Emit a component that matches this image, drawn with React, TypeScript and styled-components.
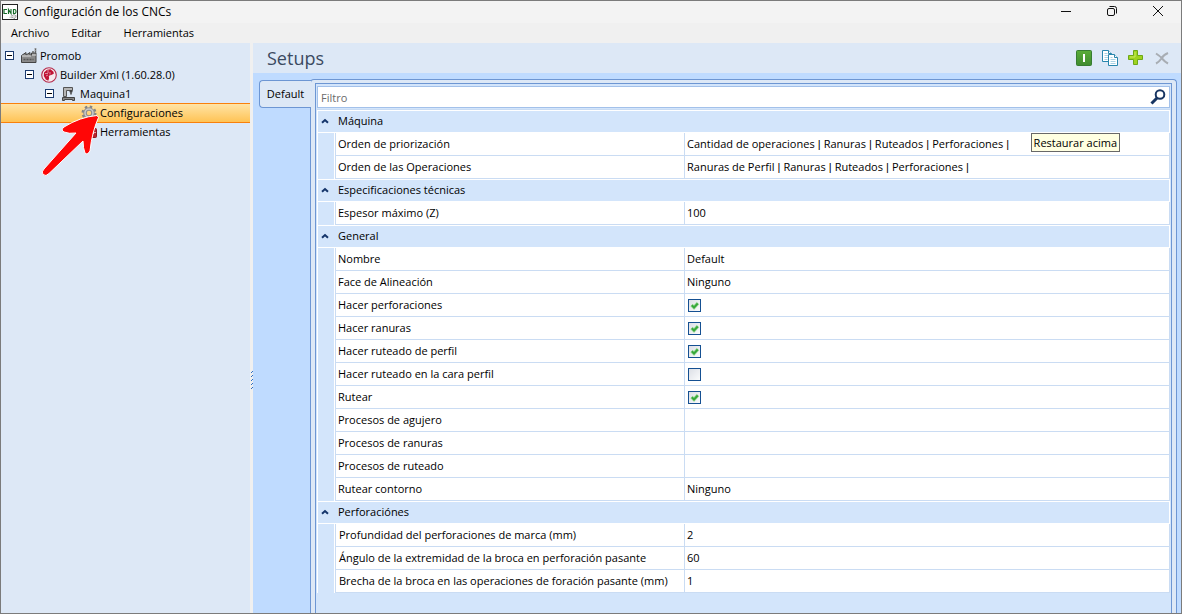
import React, { useState } from "react";
import styled, { createGlobalStyle, css } from "styled-components";

const GlobalStyle = createGlobalStyle`
  *, *::before, *::after { box-sizing: border-box; }
  body {
    margin: 0;
    background: #ffffff;
    color: #000000;
    font: 11px/16px "Open Sans", "Noto Sans", sans-serif;
  }
  button { font: inherit; color: inherit; }
`;

const Window = styled.div`
  display: flex;
  flex-direction: column;
  min-height: 100vh;
  margin-right: 3px;
  border: 1px solid #7b7b7b;
  background: #f0f0f0;
`;

const TitleBar = styled.header`
  display: flex;
  align-items: center;
  height: 22px;
  padding-left: 1px;
  background: #f3f3f3;
`;

const WindowTitle = styled.h1`
  flex: 1;
  margin: 0 0 0 6px;
  font-size: 12px;
  font-weight: 400;
`;

const CaptionButton = styled.button`
  display: flex;
  align-items: center;
  justify-content: center;
  width: 46px;
  height: 22px;
  padding: 0 0 2px;
  border: 0;
  background: transparent;
`;

const MenuBar = styled.nav`
  display: flex;
  align-items: center;
  height: 20px;
  background: #f0f0f0;
`;

const MenuButton = styled.button`
  height: 20px;
  padding: 0 10px;
  margin-right: 2px;
  border: 0;
  background: transparent;
`;

const Body = styled.div`
  display: flex;
  flex: 1;
`;

const Sidebar = styled.aside`
  position: relative;
  flex: 0 0 249px;
  padding-top: 3px;
  background: #dde8f6;
`;

const TreeItem = styled.div<{ $level: number; $selected?: boolean }>`
  display: flex;
  align-items: center;
  height: 19px;
  padding-left: ${(p) => 4 + p.$level * 20}px;
  border: solid transparent;
  border-width: 1px 0;
  ${(p) =>
    p.$selected &&
    css`
      height: 20px;
      margin-bottom: -1px;
      border-color: #f9800b;
      background: linear-gradient(#ffe4a6, #ffc355);
    `}
`;

const Expander = styled.button`
  display: flex;
  width: 9px;
  height: 9px;
  margin-right: 7px;
  padding: 0;
  border: 0;
  background: transparent;
`;

const ExpanderGap = styled.span`
  width: 16px;
`;

const TreeIcon = styled.span`
  display: flex;
  width: 16px;
  height: 16px;
  margin-right: 3px;
`;

const Pointer = styled.svg`
  position: absolute;
  left: 37px;
  top: 69px;
  pointer-events: none;
`;

const Splitter = styled.div`
  display: flex;
  flex: 0 0 3px;
  align-items: center;
  justify-content: flex-end;
  padding-top: 106px;
  background: #f0f0f0;
`;

const Main = styled.main`
  display: flex;
  flex: 1;
  flex-direction: column;
  min-width: 0;
  background: #bfdbff;
`;

const PanelHeader = styled.div`
  display: flex;
  align-items: center;
  justify-content: space-between;
  height: 30px;
  padding: 0 11px 0 14px;
  background: #dde8f6;
`;

const PanelTitle = styled.h2`
  margin: 0;
  color: #3b4a61;
  font-size: 18px;
  font-weight: 400;
  line-height: 24px;
`;

const Toolbar = styled.div`
  display: flex;
  gap: 10px;
`;

const ToolButton = styled.button`
  display: flex;
  width: 16px;
  height: 16px;
  padding: 0;
  border: 0;
  background: transparent;
`;

const TabArea = styled.div`
  display: flex;
  flex: 1;
  align-items: stretch;
  padding: 6px 4px 0 6px;
`;

const TabList = styled.div`
  z-index: 1;
  width: 52px;
  margin-right: -1px;
  padding-top: 1px;
`;

const Tab = styled.button`
  width: 52px;
  height: 28px;
  padding: 0;
  border: 1px solid #6d96d3;
  border-right: 0;
  border-radius: 4px 0 0 4px;
  background: #dde8f6;
`;

const TabPage = styled.div`
  display: flex;
  flex: 1;
  min-width: 0;
  padding: 3px 4px 0 4px;
  border: 1px solid #6d96d3;
  border-bottom: 0;
  border-radius: 4px 4px 0 0;
  background: #dde8f6;
`;

const GridPanel = styled.section`
  position: relative;
  flex: 1;
  min-width: 0;
  padding: 2px 1px 0 1px;
  border: 1px solid #6d96d3;
  border-bottom: 0;
  background: #d3e5fb;
`;

const FilterBox = styled.div`
  display: flex;
  align-items: center;
  height: 22px;
  margin-bottom: 1px;
  padding: 0 3px;
  border: 1px solid #a3c1ea;
  background: #ffffff;
`;

const FilterInput = styled.input`
  flex: 1;
  min-width: 0;
  height: 20px;
  padding: 0;
  border: 0;
  outline: 0;
  background: transparent;
  font: inherit;
  &::placeholder {
    color: #6b6b6b;
    opacity: 1;
  }
`;

const PropertyTable = styled.table`
  width: 100%;
  border-spacing: 0;
  border-top: 1px solid #c9dcf4;
  table-layout: fixed;
`;

const GutterCol = styled.col`
  width: 18px;
`;

const NameCol = styled.col`
  width: 350px;
`;

const cell = css`
  height: 23px;
  padding: 0 2px;
  font-weight: 400;
  text-align: left;
  white-space: nowrap;
`;

const CategoryCell = styled.th`
  ${cell}
  padding: 0 0 1px;
  border: 1px solid #ffffff;
  background: #d3e5fb;
`;

const CategoryButton = styled.button`
  display: flex;
  align-items: center;
  gap: 9px;
  width: 100%;
  height: 20px;
  padding: 0 3px 1px;
  border: 0;
  background: transparent;
`;

const GutterCell = styled.td`
  padding: 0;
  border: solid #ffffff;
  border-width: 0 1px;
  background: #d3e5fb;
`;

const NameCell = styled.th<{ $nested?: boolean }>`
  ${cell}
  padding-left: ${(p) => (p.$nested ? 3 : 2)}px;
  border: solid #cadcf3;
  border-width: 0 1px 1px 1px;
  background: #ffffff;
`;

const ValueCell = styled.td`
  ${cell}
  border: solid #cadcf3;
  border-width: 0 1px 1px 0;
  background: #ffffff;
`;

const Divider = styled.span`
  font-family: "Liberation Sans", sans-serif;
`;

const CheckBox = styled.span`
  display: grid;
  width: 13px;
  height: 13px;
  margin-left: 1px;
  > * {
    grid-area: 1 / 1;
  }
  > svg {
    pointer-events: none;
  }
`;

const CheckInput = styled.input`
  appearance: none;
  width: 13px;
  height: 13px;
  margin: 0;
  border: 1px solid #155092;
  background: linear-gradient(135deg, #dcdfe6, #fafbfc);
`;

const Tooltip = styled.div`
  position: absolute;
  right: 51px;
  top: 49px;
  height: 19px;
  padding: 0 2px;
  border: 1px solid #686868;
  background: #ffffe1;
  line-height: 17px;
`;

const AppIcon = () => (
  <svg width="16" height="16" viewBox="0 0 16 16">
    <rect x=".5" y=".5" width="15" height="15" fill="#fff" stroke="#222" />
    <path d="M5 5.500H2v4h3M6.500 10V5.500l2.500 4V5M11.500 5v4.500h1.500q1-.5 1-2t-1-2h-1.500" fill="none" stroke="#176b29" strokeWidth="1.200" />
    <circle cx="12" cy="12.500" r="2" fill="#ddd" stroke="#777" strokeDasharray="1 1" />
    <circle cx="9" cy="13" r="1" fill="none" stroke="#999" strokeDasharray="1 1" />
  </svg>
);

const MinusBox = () => (
  <svg width="9" height="9" viewBox="0 0 9 9" shapeRendering="crispEdges">
    <rect x=".5" y=".5" width="8" height="8" fill="#fff" stroke="#1c3c70" />
    <path d="M2 4.500h5" stroke="#000" />
  </svg>
);

const FactoryIcon = () => (
  <svg width="16" height="16" viewBox="0 0 16 16">
    <path d="M.5 14.500V7.500L5 4.500V7L9 4.500V7h1.500V5h4.500v9.500z" fill="#8b8b8b" stroke="#444" />
    <path d="M1 8h9M11 7h4" stroke="#ddd" />
    <path d="M2.500 11.500h10" stroke="#555" strokeWidth="1.500" strokeDasharray="2 1" />
    <path d="M12 5V3M14.500 5V0" stroke="#666" strokeWidth="1.500" />
    <path d="M14 3V0" stroke="#bbb" strokeWidth="1" strokeDasharray="1 1" />
  </svg>
);

const BuilderIcon = () => (
  <svg width="16" height="16" viewBox="0 0 16 16">
    <circle cx="8" cy="8" r="7.300" fill="#f5e9ee" stroke="#b42a4b" strokeWidth="1.100" />
    <path d="M3 5.500 6 2.800l3.500-.6 3 2.500.3 2-2 1L8.500 8.500l-.7.800.3 2-.8 2.500-2.500-1.200-2-3.600z" fill="#c01335" />
    <path d="M7 3v3M4 6.500h3M9 5v2.500M5 9l2-1" stroke="#e9a7b7" strokeWidth=".8" />
  </svg>
);

const MachineIcon = () => (
  <svg width="16" height="16" viewBox="0 0 16 16">
    <path d="M2.500 10.500v-9h9v3h-6v6z" fill="#b5b5b5" stroke="#555" />
    <path d="M10 4v4.500M8.500 5.500h3" stroke="#444" strokeWidth="1.500" />
    <path d="M1.500 14.500v-3h12v3h-2v-1h-8v1z" fill="#888" stroke="#444" />
  </svg>
);

const GearIcon = () => (
  <svg width="16" height="16" viewBox="0 0 16 16">
    <circle cx="8" cy="8" r="6.200" fill="none" stroke="#858585" strokeWidth="2.600" strokeDasharray="2.400 2.470" />
    <circle cx="8" cy="8" r="4" fill="none" stroke="#8e8e8e" strokeWidth="3.600" />
    <circle cx="8" cy="8" r="4" fill="none" stroke="#c9c9c9" strokeWidth="1.600" />
  </svg>
);

const ToolboxIcon = () => (
  <svg width="16" height="16" viewBox="0 0 16 16">
    <path d="M5 5V3h6v2" fill="none" stroke="#555" strokeWidth="1.500" />
    <rect x=".5" y="4.500" width="15" height="9" rx="1" fill="#b9232f" stroke="#8c1720" />
    <path d="M1 8.500h14" stroke="#e5a1a5" />
    <path d="M11 7h2v3h-2z" fill="#eee" />
  </svg>
);

const ArrowDrawing = () => (
  <Pointer width="64" height="68" viewBox="0 0 64 68" aria-hidden="true">
    <path
      d="M59 3.500Q42 5 26 15Q22.500 18 26 20Q31 22 38 21L6 57Q3 60 5 62.500Q8 65 11 61.500L45 29Q45 36 47 41Q49 43.500 52 39Q54 20 60.500 5.500Z"
      fill="#ff0606"
      stroke="#fff"
      strokeWidth="1"
      strokeLinejoin="round"
    />
  </Pointer>
);

const Grip = () => (
  <svg width="2" height="20" viewBox="0 0 2 20" shapeRendering="crispEdges" aria-hidden="true">
    {[0, 4, 8, 12, 16].map((y) => (
      <path key={y} d={`M1 ${y}h1v1h-1zM0 ${y + 1}h1v1h-1z`} fill="#2f6fc4" />
    ))}
  </svg>
);

const ActivateIcon = () => (
  <svg width="16" height="16" viewBox="0 0 16 16">
    <defs>
      <linearGradient id="activate" x2="0" y2="1">
        <stop stopColor="#5aad38" />
        <stop offset="1" stopColor="#3f8b2f" />
      </linearGradient>
    </defs>
    <rect x=".5" y=".5" width="15" height="15" rx="1" fill="url(#activate)" stroke="#377d31" />
    <path d="M8 4v8" stroke="#fff" strokeWidth="2" />
  </svg>
);

const CopyIcon = () => (
  <svg width="16" height="16" viewBox="0 0 16 16" fill="#fff" stroke="#2986ad">
    <path d="M.5.500h6l3 3v8h-9z" />
    <path d="M2.500 3.500h3M2.500 5.500h4M2.500 7.500h4M2.500 9.500h3" stroke="#a9d2e4" />
    <path d="M6.500.500v3h3" />
    <path d="M6.500 4.500h6l3 3v8h-9z" />
    <path d="M8.500 7.500h2M8.500 9.500h5M8.500 11.500h5M8.500 13.500h5" stroke="#a9d2e4" />
    <path d="M12.500 4.500v3h3" />
  </svg>
);

const AddIcon = () => (
  <svg width="16" height="16" viewBox="0 0 16 16">
    <path d="M5.500.500h4v5h5v4h-5v5h-4v-5h-5v-4h5z" fill="#9ed31f" stroke="#6da818" />
    <path d="M7 2v5H2" fill="none" stroke="#c8ea60" />
  </svg>
);

const DeleteIcon = () => (
  <svg width="16" height="16" viewBox="0 0 16 16">
    <path d="M2 3.500Q6 6 8 8.500 11 12 14 13.500M14 3Q9 5 7 9 5 12 2 13.500" fill="none" stroke="#a8adb3" strokeWidth="2" />
  </svg>
);

const SearchIcon = () => (
  <svg width="16" height="16" viewBox="0 0 16 16" fill="none" stroke="#173562">
    <circle cx="10" cy="5.500" r="4.300" strokeWidth="2" />
    <path d="M7 9 1.500 14.500" strokeWidth="3" />
  </svg>
);

const ChevronIcon = () => (
  <svg width="8" height="6" viewBox="0 0 8 6">
    <path d="M1 4.800 4 2l3 2.800" fill="none" stroke="#15356b" strokeWidth="2" />
  </svg>
);

const CheckMark = () => (
  <svg width="13" height="13" viewBox="0 0 13 13">
    <path d="M3.500 6 6 8.500 10 4" fill="none" stroke="#a6dda2" strokeWidth="3.400" />
    <path d="M3.800 6.300 6 8.500 9.700 4.500" fill="none" stroke="#38a83c" strokeWidth="2" />
  </svg>
);

type Property = { name: string; value: string | boolean | string[] };
type Category = { title: string; nested?: boolean; items: Property[] };

const categories: Category[] = [
  {
    title: "Máquina",
    items: [
      { name: "Orden de priorización", value: ["Cantidad de operaciones", "Ranuras", "Ruteados", "Perforaciones"] },
      { name: "Orden de las Operaciones", value: ["Ranuras de Perfil", "Ranuras", "Ruteados", "Perforaciones"] },
    ],
  },
  {
    title: "Especificaciones técnicas",
    items: [{ name: "Espesor máximo (Z)", value: "100" }],
  },
  {
    title: "General",
    items: [
      { name: "Nombre", value: "Default" },
      { name: "Face de Alineación", value: "Ninguno" },
      { name: "Hacer perforaciones", value: true },
      { name: "Hacer ranuras", value: true },
      { name: "Hacer ruteado de perfil", value: true },
      { name: "Hacer ruteado en la cara perfil", value: false },
      { name: "Rutear", value: true },
      { name: "Procesos de agujero", value: "" },
      { name: "Procesos de ranuras", value: "" },
      { name: "Procesos de ruteado", value: "" },
      { name: "Rutear contorno", value: "Ninguno" },
    ],
  },
  {
    title: "Perforaciónes",
    nested: true,
    items: [
      { name: "Profundidad del perforaciones de marca (mm)", value: "2" },
      { name: "Ángulo de la extremidad de la broca en perforación pasante", value: "60" },
      { name: "Brecha de la broca en las operaciones de foración pasante (mm)", value: "1" },
    ],
  },
];

const tree = [
  { label: "Promob", level: 0, icon: <FactoryIcon />, open: true },
  { label: "Builder Xml (1.60.28.0)", level: 1, icon: <BuilderIcon />, open: true },
  { label: "Maquina1", level: 2, icon: <MachineIcon />, open: true },
  { label: "Configuraciones", level: 3, icon: <GearIcon />, selected: true },
  { label: "Herramientas", level: 3, icon: <ToolboxIcon /> },
];

function PropertyRow({ item, nested }: { item: Property; nested?: boolean }) {
  const { name, value } = item;
  const isFlag = typeof value === "boolean";
  const [checked, setChecked] = useState(value === true);
  const id = name.toLowerCase().replace(/\s+/g, "-");
  return (
    <tr>
      <GutterCell />
      <NameCell scope="row" $nested={nested}>
        {isFlag ? <label htmlFor={id}>{name}</label> : name}
      </NameCell>
      <ValueCell>
        {isFlag ? (
          <CheckBox>
            <CheckInput id={id} type="checkbox" checked={checked} onChange={() => setChecked(!checked)} />
            {checked && <CheckMark />}
          </CheckBox>
        ) : Array.isArray(value) ? (
          value.map((part) => (
            <React.Fragment key={part}>
              {part}
              <Divider> | </Divider>
            </React.Fragment>
          ))
        ) : (
          value
        )}
      </ValueCell>
    </tr>
  );
}

export default function App() {
  return (
    <>
      <GlobalStyle />
      <Window>
        <TitleBar>
          <AppIcon />
          <WindowTitle>Configuración de los CNCs</WindowTitle>
          <CaptionButton aria-label="Minimizar">
            <svg width="10" height="10" viewBox="0 0 10 10"><path d="M0 5.500h10" stroke="#111" /></svg>
          </CaptionButton>
          <CaptionButton aria-label="Restaurar">
            <svg width="10" height="10" viewBox="0 0 10 10" fill="none" stroke="#111">
              <rect x=".5" y="2.500" width="7" height="7" rx="1.500" />
              <path d="M2.500.500h5q2 0 2 2v5" />
            </svg>
          </CaptionButton>
          <CaptionButton aria-label="Cerrar">
            <svg width="10" height="10" viewBox="0 0 10 10"><path d="M0 0l10 10M10 0 0 10" stroke="#111" /></svg>
          </CaptionButton>
        </TitleBar>
        <MenuBar>
          <MenuButton>Archivo</MenuButton>
          <MenuButton>Editar</MenuButton>
          <MenuButton>Herramientas</MenuButton>
        </MenuBar>
        <Body>
          <Sidebar>
            {tree.map((node) => (
              <TreeItem key={node.label} $level={node.level} $selected={node.selected}>
                {node.open ? <Expander aria-label={`Contraer ${node.label}`}><MinusBox /></Expander> : <ExpanderGap />}
                <TreeIcon>{node.icon}</TreeIcon>
                {node.label}
              </TreeItem>
            ))}
            <ArrowDrawing />
          </Sidebar>
          <Splitter><Grip /></Splitter>
          <Main>
            <PanelHeader>
              <PanelTitle>Setups</PanelTitle>
              <Toolbar>
                <ToolButton aria-label="Activar"><ActivateIcon /></ToolButton>
                <ToolButton aria-label="Copiar"><CopyIcon /></ToolButton>
                <ToolButton aria-label="Agregar"><AddIcon /></ToolButton>
                <ToolButton aria-label="Eliminar" disabled><DeleteIcon /></ToolButton>
              </Toolbar>
            </PanelHeader>
            <TabArea>
              <TabList role="tablist">
                <Tab role="tab" aria-selected="true">Default</Tab>
              </TabList>
              <TabPage role="tabpanel">
                <GridPanel>
                  <FilterBox>
                    <FilterInput type="text" placeholder="Filtro" aria-label="Filtro" />
                    <SearchIcon />
                  </FilterBox>
                  <PropertyTable>
                    <colgroup>
                      <GutterCol />
                      <NameCol />
                      <col />
                    </colgroup>
                    {categories.map((category) => (
                      <tbody key={category.title}>
                        <tr>
                          <CategoryCell colSpan={3} scope="rowgroup">
                            <CategoryButton aria-expanded="true">
                              <ChevronIcon />
                              {category.title}
                            </CategoryButton>
                          </CategoryCell>
                        </tr>
                        {category.items.map((item) => (
                          <PropertyRow key={item.name} item={item} nested={category.nested} />
                        ))}
                      </tbody>
                    ))}
                  </PropertyTable>
                  <Tooltip role="tooltip">Restaurar acima</Tooltip>
                </GridPanel>
              </TabPage>
            </TabArea>
          </Main>
        </Body>
      </Window>
    </>
  );
}
